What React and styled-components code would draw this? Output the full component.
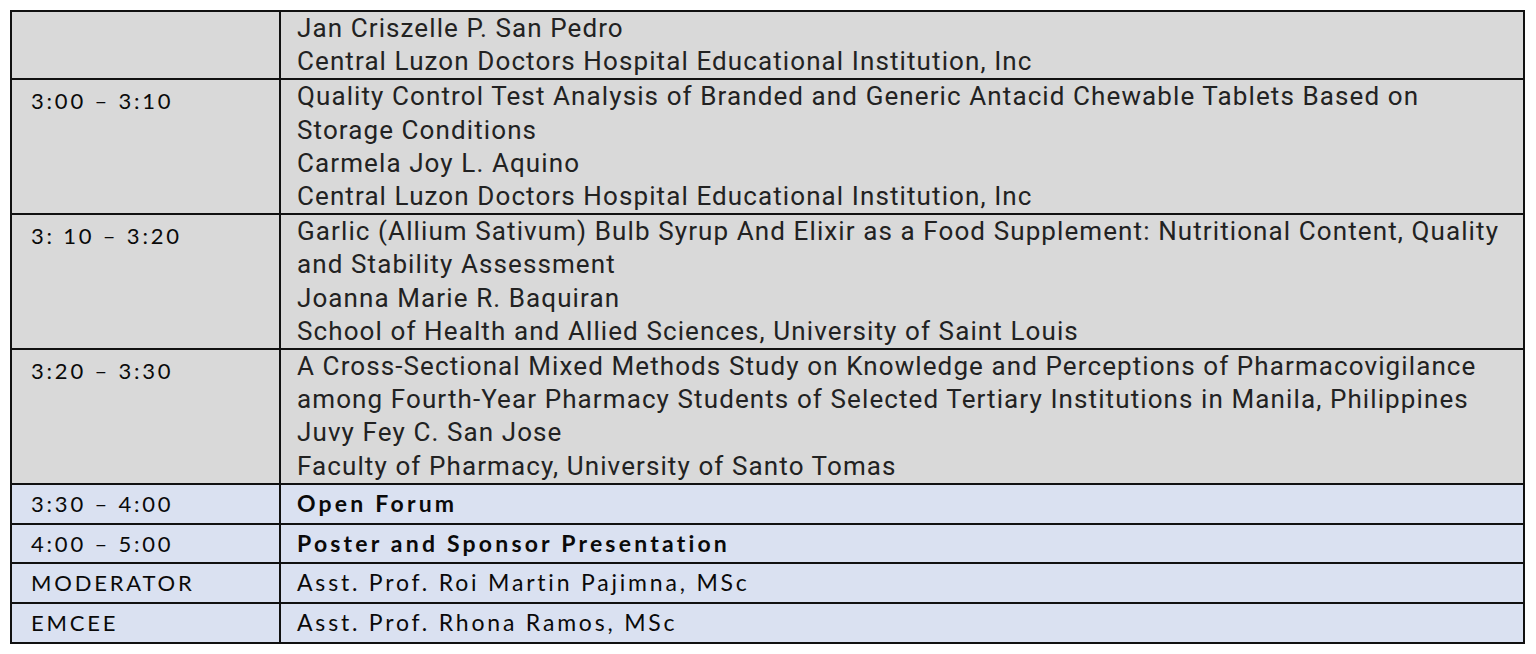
import styled, { createGlobalStyle } from "styled-components";

const GlobalStyle = createGlobalStyle`
  body {
    margin: 0;
    background: #ffffff;
  }
`;

const Page = styled.div`
  padding: 10px 11px 0 10px;
`;

const Table = styled.table`
  width: 100%;
  border-collapse: collapse;
  table-layout: fixed;
  border: 2px solid #111;
`;

const Row = styled.tr`
  background: ${(p) => (p.$tone === "blue" ? "#dae1f1" : "#d9d9d9")};
`;

const TimeCell = styled.td`
  width: 248px;
  border: 2px solid #111;
  padding: ${(p) => (p.$short ? "0 0 0 19px" : "4px 0 0 19px")};
  vertical-align: top;
  font-family: Lato, "Liberation Sans", sans-serif;
  font-size: 22px;
  letter-spacing: 2.8px;
  line-height: ${(p) => (p.$short ? "37.8px" : "33px")};
  color: #0a0a0a;
  white-space: nowrap;
`;

const TalkCell = styled.td`
  border: 2px solid #111;
  padding: 0 0 0 16px;
  vertical-align: top;
  font-family: Roboto, "Liberation Sans", sans-serif;
  font-size: 26px;
  letter-spacing: 1.1px;
  line-height: 33.2px;
  color: #222;
`;

const InfoCell = styled.td`
  border: 2px solid #111;
  padding: 0 0 0 16px;
  vertical-align: top;
  font-family: Lato, "Liberation Sans", sans-serif;
  font-size: 23px;
  letter-spacing: ${(p) => (p.$bold ? "3.2px" : "2.8px")};
  line-height: 37.8px;
  font-weight: ${(p) => (p.$bold ? 700 : 400)};
  color: #0a0a0a;
  white-space: nowrap;
`;

const Line = styled.div`
  white-space: nowrap;
`;

const talks = [
  {
    time: "",
    lines: [
      "Jan Criszelle P. San Pedro",
      "Central Luzon Doctors Hospital Educational Institution, Inc",
    ],
  },
  {
    time: "3:00 – 3:10",
    lines: [
      "Quality Control Test Analysis of Branded and Generic Antacid Chewable Tablets Based on",
      "Storage Conditions",
      "Carmela Joy L. Aquino",
      "Central Luzon Doctors Hospital Educational Institution, Inc",
    ],
  },
  {
    time: "3: 10 – 3:20",
    lines: [
      "Garlic (Allium Sativum) Bulb Syrup And Elixir as a Food Supplement: Nutritional Content, Quality",
      "and Stability Assessment",
      "Joanna Marie R. Baquiran",
      "School of Health and Allied Sciences, University of Saint Louis",
    ],
  },
  {
    time: "3:20 – 3:30",
    lines: [
      "A Cross-Sectional Mixed Methods Study on Knowledge and Perceptions of Pharmacovigilance",
      "among Fourth-Year Pharmacy Students of Selected Tertiary Institutions in Manila, Philippines",
      "Juvy Fey C. San Jose",
      "Faculty of Pharmacy, University of Santo Tomas",
    ],
  },
];

const info = [
  { time: "3:30 – 4:00", text: "Open Forum", bold: true },
  { time: "4:00 – 5:00", text: "Poster and Sponsor Presentation", bold: true },
  { time: "MODERATOR", text: "Asst. Prof. Roi Martin Pajimna, MSc" },
  { time: "EMCEE", text: "Asst. Prof. Rhona Ramos, MSc" },
];

const App = () => {
  return (
    <Page>
      <GlobalStyle />
      <Table>
        <tbody>
          {talks.map((talk, i) => (
            <Row key={i}>
              <TimeCell>{talk.time}</TimeCell>
              <TalkCell>
                {talk.lines.map((line) => (
                  <Line key={line}>{line}</Line>
                ))}
              </TalkCell>
            </Row>
          ))}
          {info.map((item) => (
            <Row key={item.time} $tone="blue">
              <TimeCell $short>{item.time}</TimeCell>
              <InfoCell $bold={item.bold}>{item.text}</InfoCell>
            </Row>
          ))}
        </tbody>
      </Table>
    </Page>
  );
};

export default App;
